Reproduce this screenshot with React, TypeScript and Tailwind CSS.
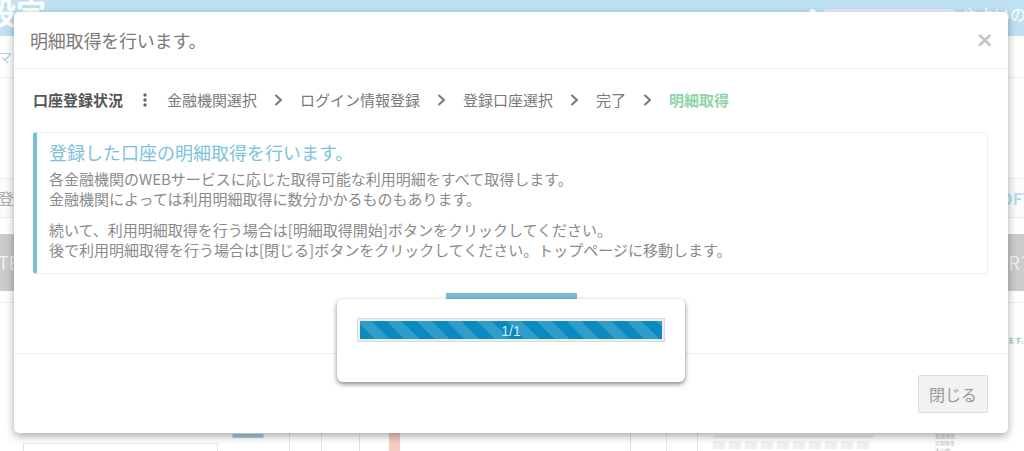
import React from "react";

const Chevron = () => (
  <svg width="9" height="12" viewBox="0 0 9 12" className="mx-[17px] shrink-0">
    <path d="M2 1.5 L7 6 L2 10.5" fill="none" stroke="#777" strokeWidth="2" strokeLinecap="round" strokeLinejoin="round" />
  </svg>
);

const Dots = () => (
  <svg width="4" height="14" viewBox="0 0 4 14" className="mx-[20px] shrink-0">
    <circle cx="2" cy="2" r="1.7" fill="#666" />
    <circle cx="2" cy="7" r="1.7" fill="#666" />
    <circle cx="2" cy="12" r="1.7" fill="#666" />
  </svg>
);

export default function App() {
  return (
    <div className="relative w-[1024px] h-[451px] overflow-hidden bg-white font-['Noto_Sans_CJK_JP','Noto_Sans',sans-serif]">
      {/* background page */}
      <div className="flex flex-col h-full">
        <header className="h-[36px] shrink-0 bg-[#bfe1f4] flex items-start justify-between overflow-hidden">
          <div className="-ml-[14px] -mt-[9px] text-[30px] leading-[40px] text-white font-bold">設定</div>
          <div className="flex items-center gap-[6px] mt-[4px] -mr-[66px]">
            <div className="w-[7px] h-[11px] rounded-full bg-white" />
            <div className="w-[134px] h-[11px] rounded-[6px] bg-[#ebebfa]" />
            <span className="text-white text-[16px] leading-[20px]">やよいの白色申告</span>
          </div>
        </header>
        <div className="h-[42px] shrink-0 border-b border-[#eeeeee] flex items-center justify-between">
          <span className="-ml-[2px] text-[14px] text-[#a9d6ee]">マ</span>
          <span />
        </div>
        <div className="h-[100px] shrink-0" />
        <div className="h-[40px] shrink-0 border-y border-[#eeeeee] bg-[#fbfbfb] flex items-center justify-between">
          <span className="-ml-[2px] text-[16px] text-[#aaaaaa]">登録</span>
          <span className="-mr-[8px] text-[16px] font-bold text-[#b3dcf2]">OFT</span>
        </div>
        <div className="h-[16px] shrink-0" />
        <div className="h-[57px] shrink-0 bg-[#cbcbcb] flex items-center justify-between">
          <span className="-ml-[2px] text-[18px] text-[#efefef]">TE</span>
          <span className="-mr-[14px] text-[18px] text-[#efefef]">Rア</span>
        </div>
        <div className="h-[12px] shrink-0 border-b border-[#eeeeee]" />
        <div className="h-[42px] shrink-0 flex items-end justify-end">
          <span className="text-[7px] text-[#7fbf8f] -mr-[4px]">ります。</span>
        </div>
        <div className="flex-1" />
        <div className="h-[18px] shrink-0 flex items-start">
          <div className="w-[23px]" />
          <div className="w-[195px] h-[10px] mt-[10px] border border-[#e6e6e6] bg-white" />
          <div className="w-[32px] h-[4px] mt-[1px] rounded-full bg-[#a8c8e0] ml-[14px]" />
          <div className="w-[25px]" />
          <div className="w-px h-full bg-[#e8e8e8]" />
          <div className="w-[31px]" />
          <div className="w-px h-full bg-[#e8e8e8]" />
          <div className="w-[37px]" />
          <div className="w-px h-full bg-[#cfe6f3]" />
          <div className="w-[29px]" />
          <div className="w-[11px] h-full bg-[#f6cbc2]" />
          <div className="w-[230px]" />
          <div className="w-px h-full bg-[#cfe6f3]" />
          <div className="w-[35px]" />
          <div className="w-px h-full bg-[#e8e8e8]" />
          <div className="w-[30px]" />
          <div className="w-px h-full bg-[#e8e8e8]" />
          <div className="w-[15px]" />
          <div className="flex flex-col gap-[3px] pt-[2px]">
            <div className="w-[160px] h-[3px] bg-[#eeeeee]" />
            <div className="flex gap-[4px]">
              {[0, 1, 2, 3, 4, 5, 6, 7, 8, 9].map((i) => (
                <div key={i} className="w-[12px] h-[8px] bg-[#f0f0f0]" />
              ))}
            </div>
          </div>
          <div className="w-[62px]" />
          <div className="flex flex-col gap-[2px] text-[5px] leading-[5px] text-[#bbbbbb]">
            <span>普通預金</span>
            <span>定期預金</span>
            <span>その他</span>
          </div>
        </div>
      </div>

      {/* modal */}
      <div className="absolute left-[14px] top-[12px] w-[994px] h-[421px] bg-white rounded-[5px] shadow-[0_3px_9px_rgba(0,0,0,0.35)] flex flex-col">
        <div className="h-[57px] shrink-0 border-b border-[#eeeeee] flex items-center justify-between pl-[16px] pr-[14px]">
          <h1 className="text-[18px] leading-[24px] text-[#7a7a7a] tracking-[-0.2px]">明細取得を行います。</h1>
          <span className="text-[22px] leading-[22px] font-bold text-[#c4c4c4] font-['DejaVu_Sans',sans-serif]">×</span>
        </div>
        <div className="flex-1 px-[19px] pt-[21px]">
          <div className="flex items-center h-[20px] text-[15px] leading-[20px] text-[#7a7a7a]">
            <span className="font-bold text-[#555555]">口座登録状況</span>
            <Dots />
            <span>金融機関選択</span>
            <Chevron />
            <span>ログイン情報登録</span>
            <Chevron />
            <span>登録口座選択</span>
            <Chevron />
            <span>完了</span>
            <Chevron />
            <span className="font-bold text-[#8fd4a9]">明細取得</span>
          </div>
          <div className="mt-[22px] w-[955px] border border-[#f0f0f0] border-l-[4px] border-l-[#7bbfd4] rounded-[3px] pl-[12px] pt-[7px] pb-[13px]">
            <h2 className="text-[18px] leading-[24px] text-[#7ec1db]">登録した口座の明細取得を行います。</h2>
            <div className="mt-[5px] text-[15px] leading-[20px] text-[#8a8a8a]">
              <p>各金融機関のWEBサービスに応じた取得可能な利用明細をすべて取得します。</p>
              <p>金融機関によっては利用明細取得に数分かかるものもあります。</p>
              <p className="mt-[11px]">続いて、利用明細取得を行う場合は[明細取得開始]ボタンをクリックしてください。</p>
              <p>後で利用明細取得を行う場合は[閉じる]ボタンをクリックしてください。トップページに移動します。</p>
            </div>
          </div>
        </div>
        <div className="h-[80px] shrink-0 border-t border-[#eeeeee] flex items-center justify-end pr-[20px]">
          <button className="w-[70px] h-[38px] bg-[#f2f2f2] border border-[#dddddd] rounded-[2px] text-[16px] text-[#9a9a9a]">
            閉じる
          </button>
        </div>
      </div>

      {/* progress popup */}
      <div className="absolute left-[446px] top-[293px] w-[131px] h-[8px] bg-[#7bbad2]" />
      <div className="absolute left-[337px] top-[299px] w-[348px] h-[83px] bg-white rounded-[6px] shadow-[0_2px_5px_rgba(0,0,0,0.5)] pl-[20px] pt-[19px]">
        <div className="w-[308px] h-[24px] border border-[#d9d9d9] bg-[#efefef] p-[2px]">
          <div className="w-full h-full bg-[#0a8ac0] bg-[repeating-linear-gradient(45deg,#0a8ac0_0px,#0a8ac0_10.6px,#2e9dca_10.6px,#2e9dca_21.2px)] flex items-end justify-center">
            <span className="text-[14px] leading-[15px] text-[#d6e9f2] font-['Liberation_Sans',sans-serif]">1/1</span>
          </div>
        </div>
      </div>
    </div>
  );
}
